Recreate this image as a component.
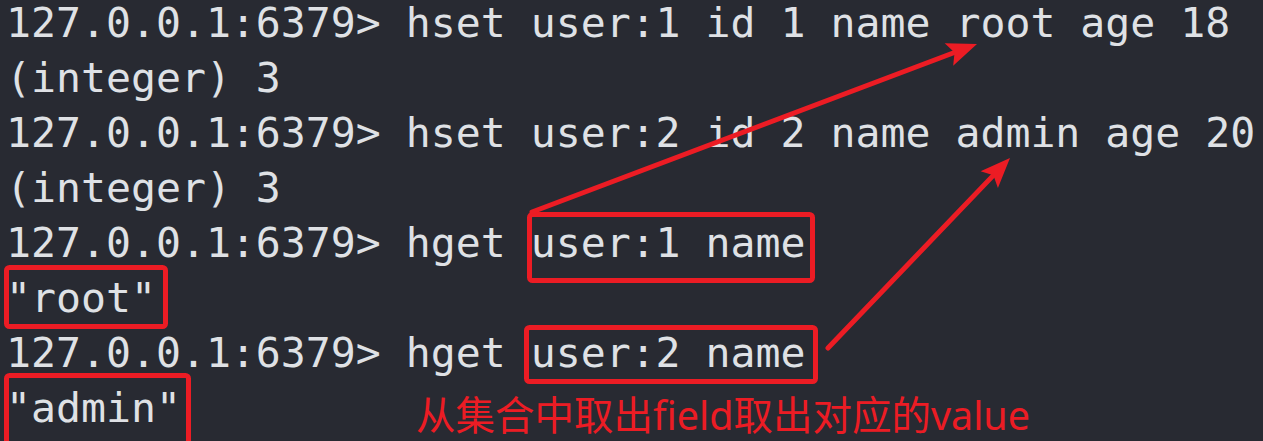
import React from 'react';

const lines = [
  '127.0.0.1:6379> hset user:1 id 1 name root age 18',
  '(integer) 3',
  '127.0.0.1:6379> hset user:2 id 2 name admin age 20',
  '(integer) 3',
  '127.0.0.1:6379> hget user:1 name',
  '"root"',
  '127.0.0.1:6379> hget user:2 name',
  '"admin"',
];

const RED = '#ec1c24';

// red rectangles drawn over the terminal (outer edges in px)
const boxes = [
  { x1: 527, y1: 212, x2: 815, y2: 283 },
  { x1: 524, y1: 325, x2: 818, y2: 384 },
  { x1: 4, y1: 265, x2: 168, y2: 329 },
  { x1: 4, y1: 373, x2: 191, y2: 446 },
];

const arrows = [
  { x1: 532, y1: 212, x2: 977, y2: 44 },
  { x1: 828, y1: 348, x2: 1010, y2: 158 },
];

function Arrow({ x1, y1, x2, y2 }: { x1: number; y1: number; x2: number; y2: number }) {
  const dx = x2 - x1;
  const dy = y2 - y1;
  const len = Math.hypot(dx, dy);
  const ux = dx / len;
  const uy = dy / len;
  const head = 30;
  const half = 12;
  const bx = x2 - ux * head;
  const by = y2 - uy * head;
  const pts = `${x2},${y2} ${bx - uy * half},${by + ux * half} ${bx + ux * 6},${by + uy * 6} ${bx + uy * half},${by - ux * half}`;
  return (
    <g>
      <line x1={x1} y1={y1} x2={bx + ux * 8} y2={by + uy * 8} stroke={RED} strokeWidth={5} strokeLinecap="round" />
      <polygon points={pts} fill={RED} />
    </g>
  );
}

export default function App() {
  return (
    <div className="relative h-[441px] w-full overflow-hidden bg-[#282a32]">
      <div className="-mt-[5px] pl-[6px] font-['DejaVu_Sans_Mono',monospace] text-[41.5px] leading-[55px] text-[#dfe1e5] whitespace-pre">
        {lines.map((l, i) => (
          <div key={i}>
            {l}
            {i === 7 && (
              <span className="ml-[235px] align-[-8px] font-['Noto_Sans','Noto_Sans_CJK_SC',sans-serif] text-[39.5px] text-[#ec1c24]">
                从集合中取出field取出对应的value
              </span>
            )}
          </div>
        ))}
      </div>
      <svg className="absolute inset-0" width="1263" height="441" viewBox="0 0 1263 441">
        {boxes.map((b, i) => (
          <rect
            key={i}
            x={b.x1 + 2.5}
            y={b.y1 + 2.5}
            width={b.x2 - b.x1 - 5}
            height={b.y2 - b.y1 - 5}
            rx={3}
            fill="none"
            stroke={RED}
            strokeWidth={5}
          />
        ))}
        {arrows.map((a, i) => (
          <Arrow key={i} {...a} />
        ))}
      </svg>
    </div>
  );
}
